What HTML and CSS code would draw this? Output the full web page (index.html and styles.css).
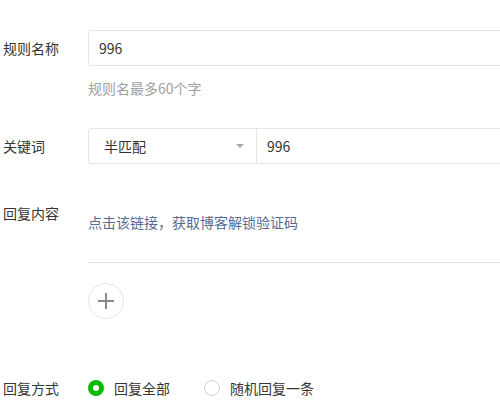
FILE: index.html
```html
<!DOCTYPE html>
<html lang="zh-CN">
<head>
<meta charset="utf-8">
<link rel="stylesheet" href="styles.css">
</head>
<body>
<div class="form">
  <div class="row row-name">
    <div class="label">规则名称</div>
    <div class="field"><span class="value">996</span></div>
  </div>
  <div class="hint">规则名最多60个字</div>

  <div class="row row-key">
    <div class="label">关键词</div>
    <div class="combo">
      <div class="select"><span class="value">半匹配</span><span class="arrow"></span></div>
      <div class="key-input"><span class="value">996</span></div>
    </div>
  </div>

  <div class="row row-reply">
    <div class="label">回复内容</div>
    <div class="reply-body">
      <div class="reply-text">点击该链接，获取博客解锁验证码</div>
      <button class="add" type="button" aria-label="添加">
        <svg width="16" height="16" viewBox="0 0 16 16"><path d="M8 0v16M0 8h16" stroke="#8a8a8a" stroke-width="2" fill="none"/></svg>
      </button>
    </div>
  </div>

  <div class="row row-mode">
    <div class="label">回复方式</div>
    <div class="radios">
      <label class="radio"><span class="dot checked"></span>回复全部</label>
      <label class="radio"><span class="dot"></span>随机回复一条</label>
    </div>
  </div>
</div>
</body>
</html>
```

FILE: styles.css
```css
html, body {
  margin: 0;
  padding: 0;
  background: #fff;
  overflow: hidden;
}
body {
  font-family: "Noto Sans CJK SC", "Noto Sans", sans-serif;
  font-size: 14px;
  line-height: 20px;
  color: #353535;
}
.form {
  padding: 30px 0 0 3px;
}
.row {
  display: flex;
}
.label {
  width: 85px;
  flex: none;
  color: #353535;
}
.row-name, .row-key {
  align-items: center;
}
.field {
  flex: 1;
  height: 34px;
  margin-right: -20px;
  border: 1px solid #e5e5e5;
  border-radius: 3px;
  display: flex;
  align-items: center;
  padding-left: 10px;
}
.value {
  color: #333;
}
.hint {
  margin: 12px 0 0 85px;
  color: #a0a0a0;
}
.row-key {
  margin-top: 30px;
}
.combo {
  flex: 1;
  display: flex;
  height: 34px;
  margin-right: -20px;
  border: 1px solid #e5e5e5;
  border-radius: 3px;
}
.select {
  flex: none;
  display: flex;
  align-items: center;
  justify-content: space-between;
  padding: 0 12px 0 15px;
  box-sizing: border-box;
  width: 168px;
  border-right: 1px solid #e5e5e5;
}
.arrow {
  width: 0;
  height: 0;
  border-left: 4px solid transparent;
  border-right: 4px solid transparent;
  border-top: 4px solid #a8a8a8;
}
.key-input {
  flex: 1;
  display: flex;
  align-items: center;
  padding-left: 10px;
}
.row-reply {
  margin-top: 39px;
  align-items: flex-start;
}
.reply-body {
  flex: 1;
}
.reply-text {
  padding: 9px 0 30px;
  color: #576b95;
  border-bottom: 1px solid #e3e5ea;
}
.add {
  margin-top: 20px;
  width: 36px;
  height: 36px;
  border-radius: 50%;
  border: 1px solid #e5e5e5;
  background: #fff;
  padding: 0;
  display: flex;
  align-items: center;
  justify-content: center;
}
.row-mode {
  margin-top: 59px;
  align-items: center;
}
.radios {
  display: flex;
}
.radio {
  display: flex;
  align-items: center;
  color: #353535;
  margin-right: 34px;
}
.dot {
  width: 16px;
  height: 16px;
  box-sizing: border-box;
  border-radius: 50%;
  border: 1px solid #d1d1d1;
  margin-right: 10px;
  background: #fff;
}
.dot.checked {
  border: 5px solid #09bb07;
}
```
